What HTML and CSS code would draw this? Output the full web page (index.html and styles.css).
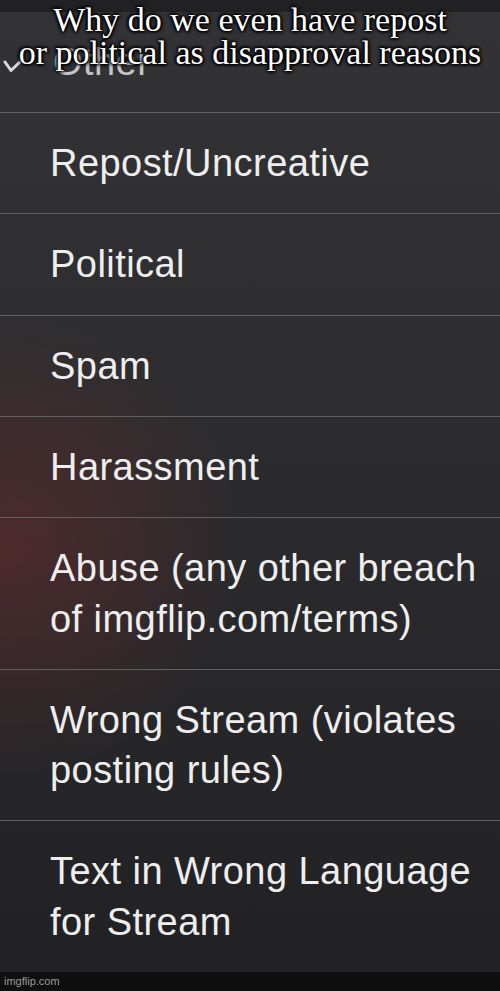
FILE: index.html
```html
<!DOCTYPE html>
<html lang="en">
<head>
    <meta charset="UTF-8">
    <meta name="viewport" content="width=device-width, initial-scale=1.0">
    <title>Disapproval reasons</title>
    <link rel="stylesheet" href="styles.css">
</head>
<body>
    <div class="screen">
        <div class="top_strip"></div>
        <ul class="reasons">
            <li class="checked">
                <span class="mark">
                    <svg class="check" width="22" height="16" viewBox="0 0 22 16">
                        <path d="M2 5 L8 13.5 L20 2" fill="none" stroke="#dadada" stroke-width="3" stroke-linecap="round" stroke-linejoin="round"/>
                    </svg>
                </span>
                <span>Other</span>
            </li>
            <li>Repost/Uncreative</li>
            <li>Political</li>
            <li>Spam</li>
            <li>Harassment</li>
            <li>Abuse (any other breach of imgflip.com/terms)</li>
            <li>Wrong Stream (violates posting rules)</li>
            <li>Text in Wrong Language for Stream</li>
        </ul>
        <div class="watermark">imgflip.com</div>

        <!-- meme caption over the screenshot -->
        <p class="caption">Why do we even have repost<br>or political as disapproval reasons</p>
    </div>
</body>
</html>
```

FILE: styles.css
```css
* {
    margin: 0;
    padding: 0;
}

body {
    width: 500px;
    height: 991px;
    overflow: hidden;
    background-color: #111;
}

.screen {
    position: relative;
    width: 500px;
    height: 991px;
    display: flex;
    flex-direction: column;
    font-family: "Liberation Sans", Arial, sans-serif;
    background:
        radial-gradient(circle at 10px 545px, rgba(105, 42, 44, 0.55), rgba(105, 42, 44, 0) 230px),
        linear-gradient(#333335, #2d2d2f 40%, #262628 75%, #212123);
}

.top_strip {
    height: 12px;
    background-color: #212123;
}

.reasons {
    flex: 1;
    list-style: none;
}

.reasons > li {
    padding: 25px 8px 25px 50px;
    font-size: 38px;
    line-height: 50.3px;
    letter-spacing: 0.45px;
    color: #eeeeee;
    border-bottom: 1px solid #5f5f61;
}

.reasons > li:last-child {
    border-bottom: none;
}

.reasons > li.checked {
    display: flex;
    padding-left: 0;
    color: #c4c4c4;
}

.mark {
    width: 50px;
    flex-shrink: 0;
    display: flex;
    align-items: center;
    padding-left: 3px;
    padding-top: 6px;
}

.check {
    flex-shrink: 0;
    width: 22px;
    height: 16px;
}

.watermark {
    height: 19px;
    padding-left: 4px;
    font-size: 11px;
    line-height: 19px;
    color: #9a9a9a;
    background-color: #0f0f0f;
}

.caption {
    position: absolute;
    top: 3px;
    left: 0;
    right: 0;
    font-family: "Liberation Serif", "Times New Roman", serif;
    font-size: 34px;
    line-height: 33px;
    color: #fff;
    text-align: center;
    text-shadow:
        0 0 2px #000,
        0 0 3px #000,
        0 0 4px #000,
        1px 1px 3px #000,
        -1px -1px 3px #000;
}
```
